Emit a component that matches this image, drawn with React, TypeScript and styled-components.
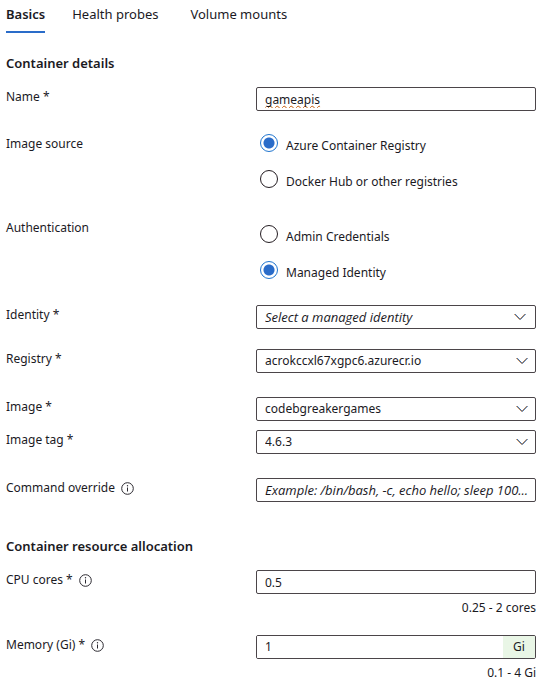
import React, { useId, useState } from "react";
import styled, { createGlobalStyle } from "styled-components";

const BLUE = "#2a6cc9";
const INK = "#1b1a1f";
const BORDER = "#4b4549";

const GlobalStyle = createGlobalStyle`
  *, *::before, *::after { box-sizing: border-box; }
  body {
    margin: 0;
    background: #fff;
    color: ${INK};
    font-family: "Noto Sans", "Open Sans", sans-serif;
    font-size: 12px;
    line-height: 20px;
  }
  input, select, button { font: inherit; color: inherit; }
`;

const Page = styled.form`
  padding: 0 6px;
`;

const Tabs = styled.div`
  display: flex;
  gap: 27px;
`;

const Tab = styled.button<{ $active: boolean }>`
  height: 33px;
  padding: 0 ${(p) => (p.$active ? 0 : 5)}px 4px 0;
  border: 0;
  border-bottom: 2px solid ${(p) => (p.$active ? BLUE : "transparent")};
  background: none;
  font-size: 13px;
  font-weight: ${(p) => (p.$active ? 600 : 400)};
  cursor: pointer;
`;

const Heading = styled.h2<{ $top: number }>`
  margin: ${(p) => p.$top}px 0 14px;
  font-size: 13px;
  line-height: 20px;
  font-weight: 600;
`;

const Row = styled.div<{ $after: number }>`
  display: grid;
  grid-template-columns: 250px minmax(0, 1fr);
  align-items: start;
  margin-bottom: ${(p) => p.$after}px;
`;

const LabelCell = styled.div`
  display: flex;
  align-items: center;
  gap: 6px;
`;

const Field = styled.div`
  display: flex;
  flex-direction: column;
`;

const TextInput = styled.input<{ $misspelled?: boolean }>`
  width: 100%;
  height: 24px;
  padding: 0 2px 0 8px;
  border: 1px solid ${BORDER};
  border-radius: 2px;
  background: #fff;
  text-overflow: ellipsis;
  text-decoration: ${(p) => (p.$misspelled ? "underline wavy #c25a08 1px" : "none")};
  text-decoration-skip-ink: none;
  &::placeholder {
    color: ${INK};
    font-family: "Open Sans", sans-serif;
    font-size: 13px;
    font-style: italic;
    opacity: 1;
  }
`;

const SelectBox = styled.div`
  position: relative;
  height: 24px;
`;

const Select = styled.select<{ $placeholder: boolean }>`
  appearance: none;
  width: 100%;
  height: 24px;
  padding: 0 28px 0 8px;
  border: 1px solid ${BORDER};
  border-radius: 2px;
  background: #fff;
  font-family: ${(p) => (p.$placeholder ? '"Open Sans", sans-serif' : "inherit")};
  font-size: ${(p) => (p.$placeholder ? 13 : 12)}px;
  font-style: ${(p) => (p.$placeholder ? "italic" : "normal")};
`;

const ChevronIcon = styled.svg<{ $inset: number }>`
  position: absolute;
  top: 8px;
  right: ${(p) => p.$inset}px;
  pointer-events: none;
`;

const RadioGroup = styled.div<{ $top: number }>`
  display: flex;
  flex-direction: column;
  gap: 16px;
  padding: ${(p) => p.$top}px 0 0 4px;
`;

const RadioOption = styled.label`
  display: flex;
  align-items: flex-start;
  gap: 8px;
  height: 20px;
`;

const RadioText = styled.span`
  padding-top: 2px;
`;

const Radio = styled.input`
  appearance: none;
  flex: none;
  width: 18px;
  height: 18px;
  margin: 0;
  border: 1px solid #241d22;
  border-radius: 50%;
  &:checked {
    border-color: #1f75cf;
    background: radial-gradient(circle, ${BLUE} 5px, #fff 6px);
  }
`;

const Hint = styled.div`
  margin-top: 4px;
  text-align: right;
`;

const UnitField = styled.div`
  display: flex;
  height: 24px;
  border: 1px solid ${BORDER};
  border-radius: 2px;
  overflow: hidden;
`;

const UnitInput = styled.input`
  flex: 1;
  min-width: 0;
  padding: 0 8px;
  border: 0;
  background: #fff;
`;

const Unit = styled.span`
  width: 32px;
  line-height: 22px;
  text-align: center;
  background: #e9f6e6;
`;

function Info() {
  return (
    <svg width="13" height="13" viewBox="0 0 13 13" fill="none" aria-hidden="true">
      <circle cx="6.5" cy="6.5" r="5.8" stroke="#2b2930" />
      <path d="M6.5 5.5v4" stroke="#2b2930" />
      <circle cx="6.5" cy="3.8" r=".7" fill="#2b2930" />
    </svg>
  );
}

function Chevron({ inset }: { inset: number }) {
  return (
    <ChevronIcon $inset={inset} width="12" height="8" viewBox="0 0 12 8" fill="none" aria-hidden="true">
      <path d="M.3 1l5.300 5.500L10.900 1" stroke="#c8803f" />
      <path d="M1.100 1l5.300 5.500L11.700 1" stroke="#3a6fae" />
    </ChevronIcon>
  );
}

function FieldLabel({ id, text, info }: { id: string; text: string; info?: boolean }) {
  return (
    <LabelCell>
      <label htmlFor={id}>{text}</label>
      {info && <Info />}
    </LabelCell>
  );
}

interface TextRowProps {
  label: string;
  after: number;
  value?: string;
  placeholder?: string;
  info?: boolean;
  misspelled?: boolean;
  hint?: string;
  unit?: string;
}

function TextRow({ label, after, value, placeholder, info, misspelled, hint, unit }: TextRowProps) {
  const id = useId();
  return (
    <Row $after={after}>
      <FieldLabel id={id} text={label} info={info} />
      <Field>
        {unit ? (
          <UnitField>
            <UnitInput id={id} defaultValue={value} />
            <Unit>{unit}</Unit>
          </UnitField>
        ) : (
          <TextInput id={id} defaultValue={value} placeholder={placeholder} $misspelled={misspelled} spellCheck={false} />
        )}
        {hint && <Hint>{hint}</Hint>}
      </Field>
    </Row>
  );
}

interface SelectRowProps {
  label: string;
  after: number;
  option: string;
  placeholder?: boolean;
}

function SelectRow({ label, after, option, placeholder = false }: SelectRowProps) {
  const id = useId();
  return (
    <Row $after={after}>
      <FieldLabel id={id} text={label} />
      <SelectBox>
        <Select id={id} $placeholder={placeholder}>
          <option>{option}</option>
        </Select>
        <Chevron inset={placeholder ? 10 : 8} />
      </SelectBox>
    </Row>
  );
}

interface RadioRowProps {
  label: string;
  options: string[];
  selected: string;
  top: number;
  after: number;
}

function RadioRow({ label, options, selected, top, after }: RadioRowProps) {
  const id = useId();
  return (
    <Row $after={after} role="radiogroup" aria-labelledby={id}>
      <LabelCell id={id}>{label}</LabelCell>
      <RadioGroup $top={top}>
        {options.map((option) => (
          <RadioOption key={option}>
            <Radio type="radio" name={id} defaultChecked={option === selected} />
            <RadioText>{option}</RadioText>
          </RadioOption>
        ))}
      </RadioGroup>
    </Row>
  );
}

const TABS = ["Basics", "Health probes", "Volume mounts"];

export default function App() {
  const [tab, setTab] = useState(TABS[0]);
  return (
    <>
      <GlobalStyle />
      <Page>
        <Tabs role="tablist">
          {TABS.map((name) => (
            <Tab key={name} type="button" role="tab" aria-selected={tab === name} $active={tab === name} onClick={() => setTab(name)}>
              {name}
            </Tab>
          ))}
        </Tabs>
        <Heading $top={20}>Container details</Heading>
        <TextRow label="Name *" value="gameapis" misspelled after={23} />
        <RadioRow
          label="Image source"
          options={["Azure Container Registry", "Docker Hub or other registries"]}
          selected="Azure Container Registry"
          top={0}
          after={28}
        />
        <RadioRow
          label="Authentication"
          options={["Admin Credentials", "Managed Identity"]}
          selected="Managed Identity"
          top={7}
          after={24}
        />
        <SelectRow label="Identity *" option="Select a managed identity" placeholder after={20} />
        <SelectRow label="Registry *" option="acrokccxl67xgpc6.azurecr.io" after={24} />
        <SelectRow label="Image *" option="codebgreakergames" after={9} />
        <SelectRow label="Image tag *" option="4.6.3" after={24} />
        <TextRow label="Command override" info placeholder="Example: /bin/bash, -c, echo hello; sleep 100..." after={0} />
        <Heading $top={34}>Container resource allocation</Heading>
        <TextRow label="CPU cores *" info value="0.5" hint="0.25 - 2 cores" after={17} />
        <TextRow label="Memory (Gi) *" info value="1" unit="Gi" hint="0.1 - 4 Gi" after={0} />
      </Page>
    </>
  );
}
